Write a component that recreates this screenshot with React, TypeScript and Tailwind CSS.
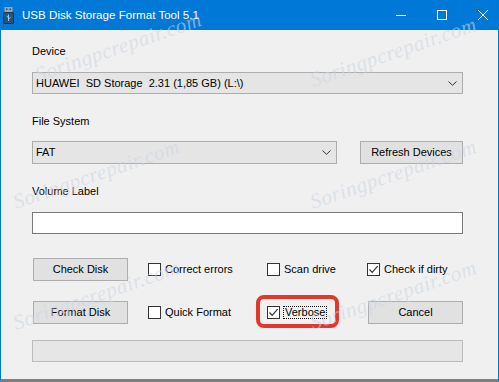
import React from "react";

const Check = () => (
  <svg width="11" height="11" viewBox="0 0 11 11" className="block">
    <path d="M1.5 5.5 L4.2 8.3 L9.6 2.2" fill="none" stroke="#333" strokeWidth="1.2" />
  </svg>
);

const Box = ({ checked, label, focus }: { checked?: boolean; label: string; focus?: boolean }) => (
  <div className="flex items-center h-[23px]">
    <div className="w-[13px] h-[13px] border border-[#333] bg-white flex items-center justify-center">
      {checked && <Check />}
    </div>
    {focus ? (
      <span className="ml-[3px] px-[1px] h-[13px] leading-[11px] border border-dotted border-black">{label}</span>
    ) : (
      <span className="ml-[4px] leading-[13px]">{label}</span>
    )}
  </div>
);

const Button = ({ label, className }: { label: string; className?: string }) => (
  <div
    className={
      "h-[23px] bg-[#e1e1e1] border border-[#adadad] flex items-center justify-center leading-[13px] " +
      (className ?? "")
    }
  >
    {label}
  </div>
);

const Chevron = () => (
  <svg width="9" height="5" viewBox="0 0 9 5" className="block">
    <path d="M0.5 0.5 L4.5 4.3 L8.5 0.5" fill="none" stroke="#333" strokeWidth="1" />
  </svg>
);

const marks = [
  "left-[30px] top-[35px]",
  "left-[305px] top-[40px]",
  "left-[8px] top-[162px]",
  "left-[305px] top-[162px]",
  "left-[8px] top-[283px]",
  "left-[305px] top-[283px]",
];

export default function App() {
  return (
    <div className="relative w-[499px] h-[382px] overflow-hidden bg-[#f0f0f0] border-x border-[#0078d7] border-b-[3px] border-b-[#7f7f7f] font-['Liberation_Sans',Arial,sans-serif] text-[11px] text-black">
      {/* title bar */}
      <div className="h-[30px] bg-[#0078d7] flex items-center text-white">
        <svg width="11" height="17" viewBox="0 0 11 17" className="ml-[2px] mt-[1px]">
          <rect x="1.5" y="0" width="8" height="5" fill="#9aa6b2" />
          <rect x="3" y="1.5" width="1.5" height="1.5" fill="#3b4b5a" />
          <rect x="6.5" y="1.5" width="1.5" height="1.5" fill="#3b4b5a" />
          <rect x="0" y="5" width="11" height="12" rx="1.5" fill="#1e3550" />
          <rect x="1" y="6" width="9" height="10" rx="1" fill="#27527a" />
          <path d="M5.5 7.5 V14 M5.5 10.5 L3.5 9 M5.5 12 L7.5 10.5" stroke="#8fd0ff" strokeWidth="1" fill="none" />
        </svg>
        <span className="ml-[8px] text-[11.6px] leading-[16px]">USB Disk Storage Format Tool 5.1</span>
        <div className="ml-auto flex items-center mr-[10px]">
          <svg width="10" height="10" viewBox="0 0 10 10" className="block">
            <path d="M0 5.5 H10" stroke="white" strokeWidth="1" />
          </svg>
          <svg width="10" height="10" viewBox="0 0 10 10" className="block ml-[31px]">
            <rect x="0.5" y="0.5" width="9" height="9" fill="none" stroke="white" strokeWidth="1" />
          </svg>
          <svg width="10" height="10" viewBox="0 0 10 10" className="block ml-[31px]">
            <path d="M0 0 L10 10 M10 0 L0 10" stroke="white" strokeWidth="1" />
          </svg>
        </div>
      </div>

      {/* body */}
      <div className="pl-[31px] w-[462px] flex flex-col">
        <div className="mt-[15px] leading-[13px]">Device</div>
        <div className="mt-[14px] h-[22px] bg-[#e5e5e5] border border-[#adadad] flex items-center pl-[3px] pr-[5px]">
          <span className="whitespace-pre leading-[13px]">HUAWEI  SD Storage  2.31 (1,85 GB) (L:\)</span>
          <span className="ml-auto">
            <Chevron />
          </span>
        </div>

        <div className="mt-[21px] leading-[13px]">File System</div>
        <div className="mt-[13px] flex h-[23px]">
          <div className="w-[305px] h-[23px] bg-[#e5e5e5] border border-[#adadad] flex items-center pl-[3px] pr-[5px]">
            <span className="leading-[13px]">FAT</span>
            <span className="ml-auto">
              <Chevron />
            </span>
          </div>
          <Button label="Refresh Devices" className="ml-[23px] w-[103px]" />
        </div>

        <div className="mt-[21px] leading-[13px]">Volume Label</div>
        <div className="mt-[14px] h-[22px] bg-white border border-[#7a7a7a]" />

        <div className="mt-[24px] grid grid-cols-[116px_119px_100px_96px]">
          <Button label="Check Disk" className="ml-[1px] w-[95px]" />
          <Box label="Correct errors" />
          <Box label="Scan drive" />
          <Box checked label="Check if dirty" />
        </div>

        <div className="mt-[20px] grid grid-cols-[116px_119px_100px_96px]">
          <Button label="Format Disk" className="ml-[1px] w-[95px]" />
          <Box label="Quick Format" />
          <div className="relative">
            <Box checked focus label="Verbose" />
            <div className="absolute left-[-11px] top-[-6px] w-[83px] h-[33px] border-[4px] border-[#e3372e] rounded-[8px]" />
          </div>
          <Button label="Cancel" className="ml-[1px] w-[95px]" />
        </div>

        <div className="mt-[16px] h-[22px] bg-[#e6e6e6] border border-[#bcbcbc]" />
      </div>

      {/* watermark */}
      {marks.map((m) => (
        <div
          key={m}
          className={
            "absolute pointer-events-none -rotate-[19deg] origin-center italic font-['Liberation_Serif',serif] text-[21px] leading-[24px] tracking-[0.5px] text-[#cdd6e3]/60 " +
            m
          }
        >
          Soringpcrepair.com
        </div>
      ))}
    </div>
  );
}
